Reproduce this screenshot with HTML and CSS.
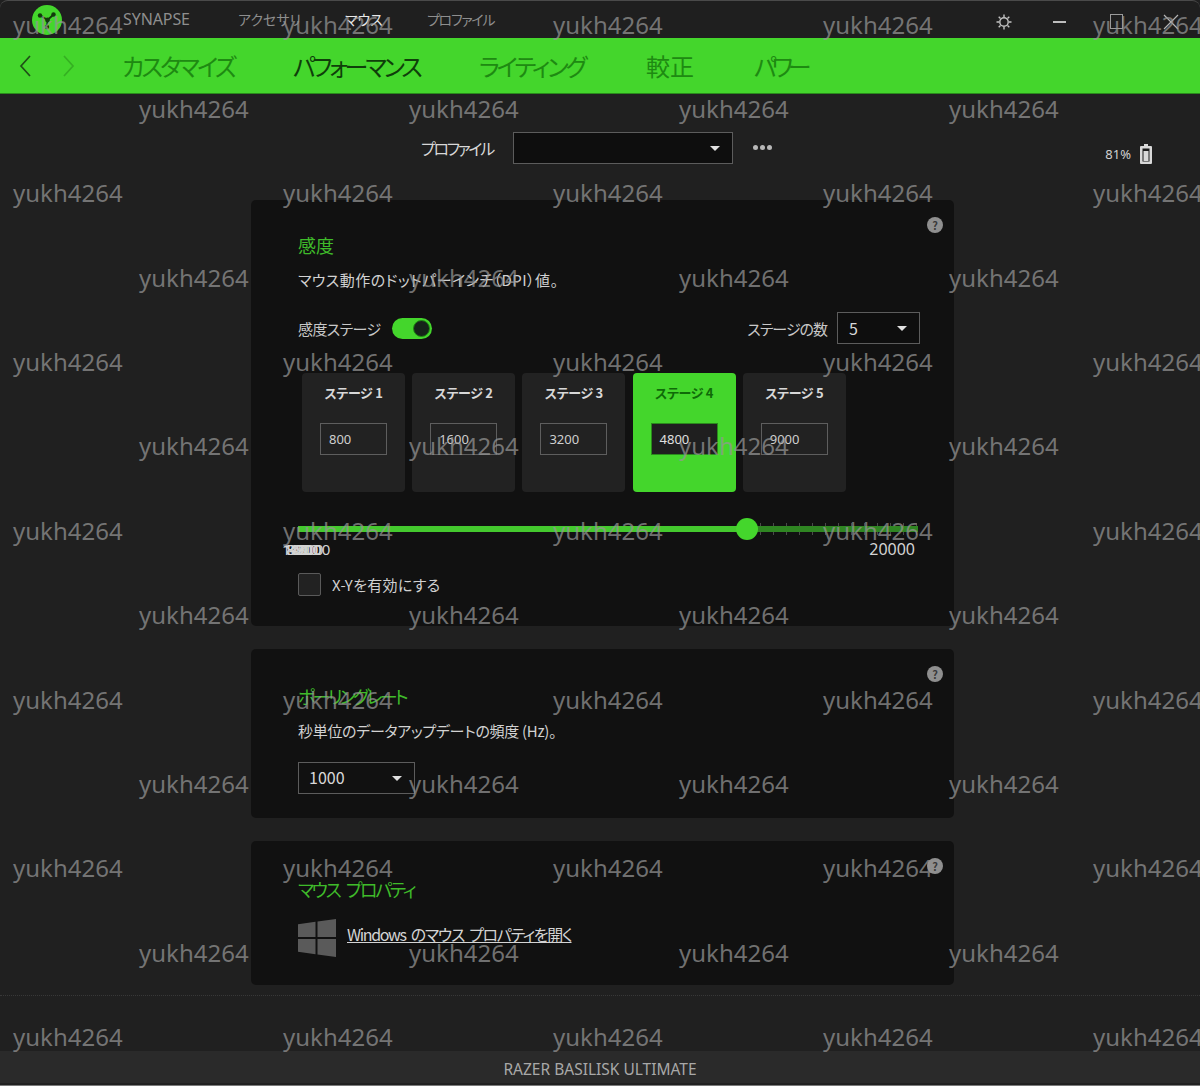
FILE: index.html
```html
<!DOCTYPE html>
<html lang="ja">
<head>
<meta charset="utf-8">
<title>Razer Synapse</title>
<link rel="stylesheet" href="styles.css">
</head>
<body>
<div class="window">
  <header class="titlebar">
    <svg class="logo" viewBox="0 0 30 30" width="30" height="30"><circle cx="15" cy="15" r="15" fill="#44d62c"/><path d="M15.500 15 8.500 10.500M15.500 15 21 10M15.500 15 15 21.500" stroke="#123a0c" stroke-width="1.800" fill="none"/><circle cx="8" cy="10.500" r="2.200" fill="#123a0c"/><circle cx="21.500" cy="9.500" r="2.200" fill="#123a0c"/><circle cx="15" cy="22" r="2.200" fill="#123a0c"/><circle cx="15.500" cy="15" r="2.400" fill="#123a0c"/></svg>
    <nav class="topnav">
      <span class="topnav-synapse">SYNAPSE</span>
      <span class="topnav-acc">アクセサリ</span>
      <span class="topnav-mouse">マウス</span>
      <span class="topnav-prof">プロファイル</span>
    </nav>
    <div class="winctl">
      <svg class="ctl-gear" viewBox="0 0 16 16" width="16" height="16"><circle cx="8" cy="8" r="4.200" fill="none" stroke="#c4c4c4" stroke-width="1.400"/><path d="M8 0.500v2.600M8 12.900v2.600M.5 8h2.600M12.900 8h2.600M2.700 2.700l1.800 1.800M11.500 11.500l1.800 1.800M13.300 2.700l-1.800 1.800M4.500 11.500l-1.800 1.800" stroke="#c4c4c4" stroke-width="1.400"/></svg>
      <span class="ctl-min"></span>
      <span class="ctl-max"></span>
      <svg class="ctl-close" viewBox="0 0 16 16" width="16" height="16"><path d="M1 1l14 14M15 1 1 15" stroke="#b4b4b4" stroke-width="1.200"/></svg>
    </div>
  </header>

  <nav class="tabs">
    <svg class="arrow" viewBox="0 0 14 24" width="14" height="24"><path d="M12 2 3 12l9 10" fill="none" stroke="#1f4f17" stroke-width="1.700"/></svg>
    <svg class="arrow arrow-off" viewBox="0 0 14 24" width="14" height="24"><path d="M2 2l9 10-9 10" fill="none" stroke="#35b022" stroke-width="1.700"/></svg>
    <span class="tab tab-custom">カスタマイズ</span>
    <span class="tab tab-active">パフォーマンス</span>
    <span class="tab tab-light">ライティング</span>
    <span class="tab tab-cal">較正</span>
    <span class="tab tab-power">パワー</span>
  </nav>

  <main class="content">
    <div class="profile-row">
      <span class="profile-label">プロファイル</span>
      <div class="select select-profile"><i class="caret"></i></div>
      <div class="dots"><i></i><i></i><i></i></div>
      <div class="battery">
        <span>81%</span>
        <svg viewBox="0 0 12 20" width="12" height="20"><path d="M4 0h4v2h3a1 1 0 0 1 1 1v16a1 1 0 0 1-1 1H1a1 1 0 0 1-1-1V3a1 1 0 0 1 1-1h3z" fill="#d8d8d8"/><rect x="2.500" y="4.500" width="7" height="13" fill="#1a1a1a"/><rect x="3.500" y="7" width="5" height="10" fill="#d8d8d8"/></svg>
      </div>
    </div>

    <section class="card card-sens">
      <i class="help">?</i>
      <h2 class="card-title">感度</h2>
      <p class="card-desc">マウス動作のドットパーインチ（DPI）値。</p>
      <div class="stage-head">
        <span class="light">感度ステージ</span>
        <span class="toggle"><i></i></span>
        <span class="light stage-count">ステージの数</span>
        <div class="select select-count"><span>5</span><i class="caret"></i></div>
      </div>
      <div class="stages">
        <div class="stage"><b>ステージ 1</b><span class="dpi">800</span></div>
        <div class="stage"><b>ステージ 2</b><span class="dpi">1600</span></div>
        <div class="stage"><b>ステージ 3</b><span class="dpi">3200</span></div>
        <div class="stage stage-on"><b>ステージ 4</b><span class="dpi">4800</span></div>
        <div class="stage"><b>ステージ 5</b><span class="dpi">9000</span></div>
      </div>
      <div class="slider"><span class="slider-fill"></span><span class="slider-rest"></span><span class="slider-knob"></span></div>
      <div class="scale">
        <div class="scale-stack"><span>100</span><span>800</span><span>1600</span><span>3200</span><span>4800</span><span>9000</span></div>
        <span class="scale-max">20000</span>
      </div>
      <label class="xy"><i class="check"></i><span>X-Yを有効にする</span></label>
    </section>

    <section class="card card-poll">
      <i class="help">?</i>
      <h2 class="card-title">ポーリングレート</h2>
      <p class="card-desc">秒単位のデータアップデートの頻度 (Hz)。</p>
      <div class="select select-rate"><span>1000</span><i class="caret"></i></div>
    </section>

    <section class="card card-props">
      <i class="help">?</i>
      <h2 class="card-title">マウス プロパティ</h2>
      <div class="win-link">
        <svg viewBox="0 0 38 38" width="38" height="38"><path d="M0 5.200 17.500 2.800V18H0zM19.500 2.500 38 0V18H19.500zM0 20h17.500v15.200L0 32.800zM19.500 20H38v18l-18.500-2.500z" fill="#5a5a5a"/></svg>
        <a class="link">Windows のマウス プロパティを開く</a>
      </div>
    </section>
  </main>

  <div class="divider"></div>
  <footer class="footer">RAZER BASILISK ULTIMATE</footer>
</div>

<div class="watermark">
  <div class="wm-row"><span>yukh4264</span><span>yukh4264</span><span>yukh4264</span><span>yukh4264</span><span>yukh4264</span></div>
  <div class="wm-row wm-even"><span>yukh4264</span><span>yukh4264</span><span>yukh4264</span><span>yukh4264</span></div>
  <div class="wm-row"><span>yukh4264</span><span>yukh4264</span><span>yukh4264</span><span>yukh4264</span><span>yukh4264</span></div>
  <div class="wm-row wm-even"><span>yukh4264</span><span>yukh4264</span><span>yukh4264</span><span>yukh4264</span></div>
  <div class="wm-row"><span>yukh4264</span><span>yukh4264</span><span>yukh4264</span><span>yukh4264</span><span>yukh4264</span></div>
  <div class="wm-row wm-even"><span>yukh4264</span><span>yukh4264</span><span>yukh4264</span><span>yukh4264</span></div>
  <div class="wm-row"><span>yukh4264</span><span>yukh4264</span><span>yukh4264</span><span>yukh4264</span><span>yukh4264</span></div>
  <div class="wm-row wm-even"><span>yukh4264</span><span>yukh4264</span><span>yukh4264</span><span>yukh4264</span></div>
  <div class="wm-row"><span>yukh4264</span><span>yukh4264</span><span>yukh4264</span><span>yukh4264</span><span>yukh4264</span></div>
  <div class="wm-row wm-even"><span>yukh4264</span><span>yukh4264</span><span>yukh4264</span><span>yukh4264</span></div>
  <div class="wm-row"><span>yukh4264</span><span>yukh4264</span><span>yukh4264</span><span>yukh4264</span><span>yukh4264</span></div>
  <div class="wm-row wm-even"><span>yukh4264</span><span>yukh4264</span><span>yukh4264</span><span>yukh4264</span></div>
  <div class="wm-row"><span>yukh4264</span><span>yukh4264</span><span>yukh4264</span><span>yukh4264</span><span>yukh4264</span></div>
</div>
</body>
</html>
```

FILE: styles.css
```css
* { box-sizing: border-box; }
html, body { margin: 0; height: 100%; }
body {
  position: relative;
  width: 1200px;
  height: 1086px;
  overflow: hidden;
  background: #202020;
  font-family: "Noto Sans CJK JP", "Noto Sans", sans-serif;
  font-feature-settings: "palt";
  color: #cfcfcf;
}
i { font-style: normal; display: block; }
.window { display: flex; flex-direction: column; height: 1086px; border-bottom: 1px solid #7a7a7a; }

.titlebar {
  height: 38px;
  flex: none;
  display: flex;
  align-items: flex-start;
  padding: 4px 0 0 32px;
  background: #1f1f1f;
  border-top: 1px solid #4a4a4a;
  border-radius: 8px 8px 0 0;
}
.logo { flex: none; }
.topnav { display: flex; font-size: 14px; line-height: 20px; color: #8e8e8e; padding: 4px 0 0 0; }
.topnav-synapse { margin-left: 61px; font-family: "Noto Sans", sans-serif; font-size: 16px; letter-spacing: -0.1px; width: 115px; }
.topnav-acc { width: 107px; }
.topnav-mouse { width: 82px; color: #e8e8e8; }
.topnav-prof { letter-spacing: -1.300px; }
.winctl { margin-left: auto; display: flex; align-items: center; padding: 7px 21px 0 0; height: 26px; }
.ctl-min { width: 13px; height: 2px; background: #bdbdbd; margin-left: 41px; }
.ctl-max { width: 13px; height: 15px; border: 1px solid #9a9a9a; margin-left: 44px; }
.ctl-close { margin-left: 40px; }

.tabs {
  height: 56px;
  flex: none;
  display: flex;
  align-items: center;
  background: #44d62c;
  font-size: 24px;
  color: #1e8a12;
  padding-left: 18px;
  border-bottom: 1px solid #2a8a1c;
}
.arrow { flex: none; margin-right: 30px; }
.arrow-off { margin-right: 46px; }
.tab { white-space: nowrap; line-height: 30px; letter-spacing: -2.800px; }
.tab-custom { width: 171px; }
.tab-active { width: 186px; color: #0f3f0a; letter-spacing: -3.200px; }
.tab-light { width: 167px; letter-spacing: -3px; }
.tab-cal { width: 108px; letter-spacing: 0; }
.tab-power { letter-spacing: -5px; }

.content { flex: none; display: flex; flex-direction: column; align-items: flex-start; padding-left: 251px; }

.profile-row {
  display: flex;
  align-items: center;
  width: 901px;
  height: 32px;
  margin-top: 38px;
  margin-bottom: 36px;
}
.profile-label { margin-left: 170px; width: 92px; font-size: 16px; letter-spacing: -2.300px; color: #d8d8d8; }
.select {
  position: relative;
  background: #0e0e0e;
  border: 1px solid #5c5c5c;
  color: #d8d8d8;
  font-size: 16px;
}
.caret {
  position: absolute;
  top: 50%;
  right: 12px;
  margin-top: -2px;
  width: 0;
  height: 0;
  border-left: 5px solid transparent;
  border-right: 5px solid transparent;
  border-top: 5px solid #e0e0e0;
}
.select-profile { width: 220px; height: 32px; }
.dots { display: flex; gap: 2px; margin-left: 20px; margin-top: -2px; }
.dots i { width: 5px; height: 5px; border-radius: 50%; background: #b8b8b8; }
.battery { margin-left: auto; display: flex; align-items: center; gap: 9px; font-size: 13px; color: #d0d0d0; padding-top: 12px; }
.battery span { font-family: "Noto Sans", sans-serif; }

.card {
  position: relative;
  width: 703px;
  background: #111111;
  border-radius: 5px;
  padding: 33px 34px 0 47px;
  margin-bottom: 23px;
}
.card-sens { height: 426px; }
.card-poll { height: 169px; padding-top: 35px; }
.card-props { height: 144px; padding-top: 36px; }
.help {
  position: absolute;
  top: 17px;
  right: 11px;
  width: 16px;
  height: 16px;
  border-radius: 50%;
  background: #8f8f8f;
  color: #3a3a3a;
  font-size: 11px;
  font-weight: 700;
  line-height: 16px;
  text-align: center;
}
.card-title { margin: 0; font-size: 18px; font-weight: 400; line-height: 24px; color: #3fbb2a; }
.card-poll .card-title { letter-spacing: -2.700px; }
.card-props .card-title { letter-spacing: -2.400px; word-spacing: 5px; }
.card-desc { margin: 12px 0 0; font-size: 15px; line-height: 22px; color: #d2d2d2; letter-spacing: 0.450px; }
.card-poll .card-desc { letter-spacing: -0.300px; }
.light { font-size: 15px; color: #c8c8c8; letter-spacing: -0.600px; }

.stage-head { display: flex; align-items: center; height: 32px; margin-top: 21px; }
.toggle {
  position: relative;
  width: 40px;
  height: 21px;
  margin-left: 11px;
  border-radius: 11px;
  background: #44d62c;
}
.toggle i {
  position: absolute;
  right: 2px;
  top: 2px;
  width: 17px;
  height: 17px;
  border-radius: 50%;
  background: #16231a;
  border: 1px solid #1e8a12;
}
.stage-count { margin-left: auto; letter-spacing: -1px; }
.select-count { width: 83px; height: 32px; margin-left: 10px; padding-left: 11px; line-height: 30px; }

.stages { display: flex; gap: 7.200px; margin: 29px 0 0 4px; }
.stage {
  width: 103px;
  height: 119px;
  display: flex;
  flex-direction: column;
  align-items: center;
  background: #222222;
  border-radius: 4px;
  padding-top: 10px;
}
.stage b { font-size: 13px; line-height: 20px; letter-spacing: -0.300px; color: #d8d8d8; }
.dpi {
  width: 67px;
  height: 32px;
  margin-top: 20px;
  padding-left: 8px;
  border: 1px solid #5e5e5e;
  font-family: "Noto Sans", sans-serif;
  font-size: 13px;
  line-height: 30px;
  color: #cfcfcf;
}
.stage-on { background: #44d62c; }
.stage-on b { color: #0f6a08; }
.stage-on .dpi { background: #1f1f1f; border-color: #2a8a1c; color: #e0e0e0; }

.slider { position: relative; display: flex; align-items: center; height: 22px; margin-top: 26px; }
.slider-fill { width: 449px; height: 6px; background: #44c92e; }
.slider-rest {
  flex: 1;
  height: 12px;
  margin-right: 2px;
  background:
    linear-gradient(#2f8522, #2f8522) 0 3px / 100% 6px no-repeat,
    repeating-linear-gradient(90deg, #4a4a4a 0 1px, transparent 1px 13px);
}
.slider-knob {
  position: absolute;
  left: 438px;
  top: 0;
  width: 22px;
  height: 22px;
  border-radius: 50%;
  background: #44d62c;
}

.scale { display: flex; justify-content: space-between; height: 20px; margin: -1px 0 -1px -16px; padding-right: 5px; font-family: "Noto Sans", sans-serif; font-size: 15px; line-height: 20px; color: #d4d4d4; }
.scale-max { font-size: 16px; }
.scale-stack { display: grid; }
.scale-stack span { grid-area: 1 / 1; }
.scale-stack span:nth-child(2) { margin-left: 4px; }
.scale-stack span:nth-child(3) { margin-left: 2px; }
.scale-stack span:nth-child(4) { margin-left: 5px; }
.scale-stack span:nth-child(5) { margin-left: 7px; }
.scale-stack span:nth-child(6) { margin-left: 14px; }

.xy { display: flex; align-items: center; gap: 11px; margin-top: 15px; font-size: 15px; letter-spacing: 0.300px; color: #d0d0d0; }
.check { width: 23px; height: 23px; border: 1px solid #5a5a5a; border-radius: 2px; background: #222222; }

.select-rate { width: 117px; height: 32px; margin-top: 20px; padding-left: 10px; line-height: 29px; background: #111111; }

.win-link { display: flex; align-items: center; gap: 11px; margin-top: 18px; }
.link { margin-top: -8px; font-size: 16px; letter-spacing: -1.350px; word-spacing: 3px; color: #d4d4d4; text-decoration: underline; }

.divider { height: 0; flex: none; margin-top: -13px; border-top: 1px dotted #383838; }
.footer {
  flex: none;
  height: 32px;
  margin-top: 55px;
  background: #2a2a2a;
  font-family: "Noto Sans", sans-serif;
  font-size: 15.500px;
  line-height: 36px;
  text-align: center;
  color: #a8a8a8;
}

.watermark {
  position: absolute;
  inset: 0;
  display: flex;
  flex-direction: column;
  pointer-events: none;
  padding-top: 7.500px;
}
.wm-row {
  display: flex;
  flex: none;
  height: 84.400px;
  gap: 161px;
  padding-left: 13px;
  font-family: "Noto Sans", sans-serif;
  font-size: 24px;
  line-height: 34px;
  color: rgba(150, 150, 150, 0.72);
  white-space: nowrap;
}
.wm-row span { width: 109px; flex: none; }
.wm-even { padding-left: 139px; }
```
